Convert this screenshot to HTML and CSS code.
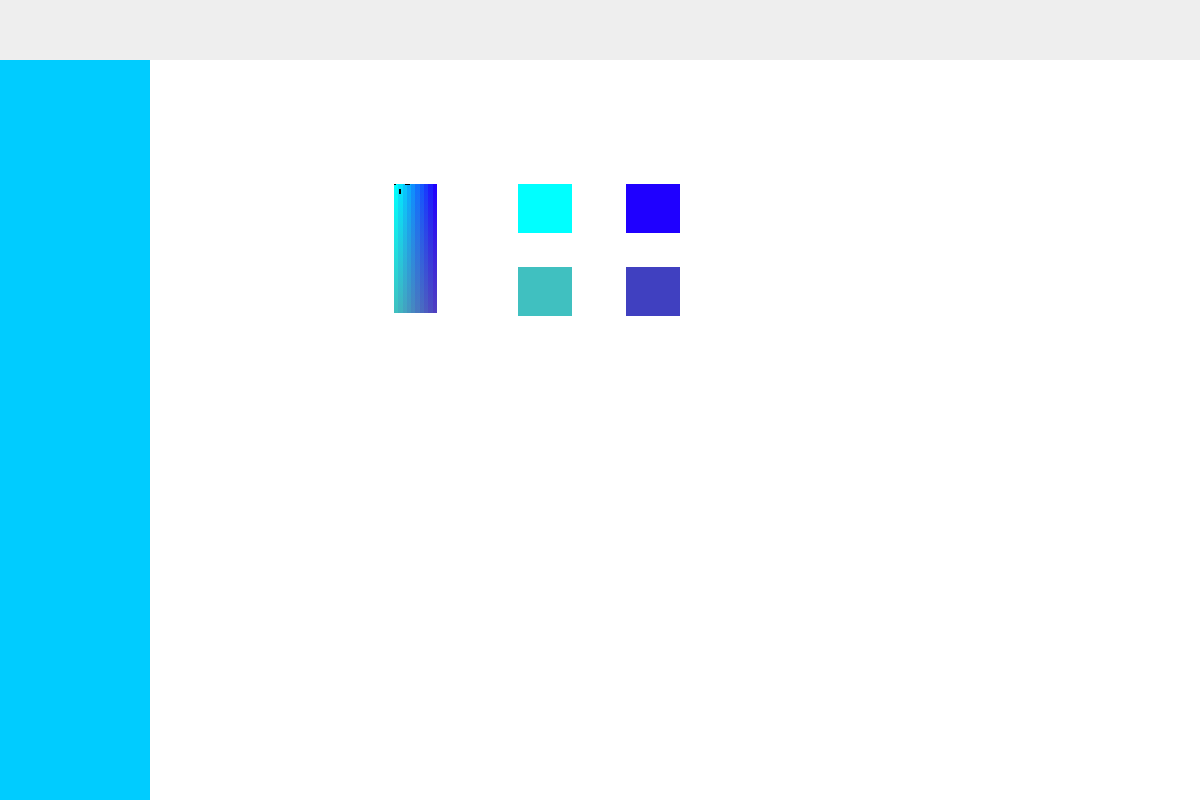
FILE: index.html
```html
<!DOCTYPE html>
<html>
<head>
<meta charset="utf-8">
<link rel="stylesheet" href="styles.css">
</head>
<body>
<header class="topbar"></header>
<div class="layout">
  <aside class="sidebar"></aside>
  <main class="main">
    <div class="stage">
      <div class="gradient-box">
        <span class="mark mark-a"></span>
        <span class="mark mark-b"></span>
        <span class="mark mark-c"></span>
      </div>
      <div class="swatches">
        <div class="swatch cyan"></div>
        <div class="swatch blue"></div>
        <div class="swatch teal"></div>
        <div class="swatch indigo"></div>
      </div>
    </div>
  </main>
</div>
</body>
</html>
```
FILE: styles.css
```css
html, body {
  margin: 0;
  padding: 0;
  width: 1200px;
  height: 800px;
  overflow: hidden;
  background: #ffffff;
  font-family: "Liberation Sans", Arial, sans-serif;
}
.topbar {
  height: 60px;
  background: #eeeeee;
}
.layout {
  display: flex;
  height: 740px;
}
.sidebar {
  width: 150px;
  flex: none;
  background: #00ccff;
}
.main {
  flex: 1;
  background: #ffffff;
}
.stage {
  display: flex;
  align-items: flex-start;
  gap: 81px;
  padding: 124px 0 0 244px;
}
.gradient-box {
  position: relative;
  width: 43px;
  height: 129px;
  background:
    linear-gradient(to bottom, rgba(128,128,128,0), rgba(128,128,128,0.5)),
    linear-gradient(to right,
      rgb(0,255,255) 0 10%,
      rgb(3,227,255) 10% 20%,
      rgb(7,198,255) 20% 30%,
      rgb(10,170,255) 30% 40%,
      rgb(14,142,255) 40% 50%,
      rgb(17,113,255) 50% 60%,
      rgb(21,85,255) 60% 70%,
      rgb(24,57,255) 70% 80%,
      rgb(28,28,255) 80% 90%,
      rgb(31,0,255) 90% 100%);
}
.mark {
  position: absolute;
  background: #000000;
}
.mark-a { left: 0; top: 0; width: 2px; height: 1px; }
.mark-b { left: 11px; top: 0; width: 5px; height: 1px; }
.mark-c { left: 5px; top: 5px; width: 2px; height: 5px; }
.swatches {
  display: grid;
  grid-template-columns: 54px 54px;
  grid-auto-rows: 49px;
  column-gap: 54px;
  row-gap: 34px;
}
.cyan { background: #00ffff; }
.blue { background: #1f00ff; }
.teal { background: #40c0c0; }
.indigo { background: #4040c0; }
```
